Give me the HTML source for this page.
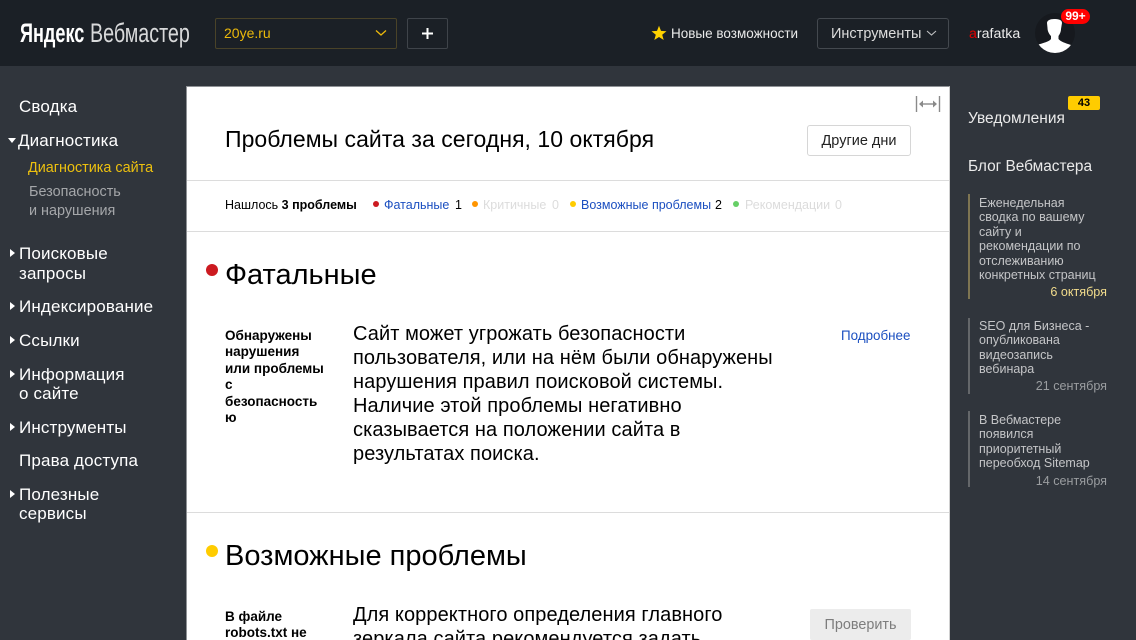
<!DOCTYPE html>
<html lang="ru">
<head>
<meta charset="utf-8">
<style>
html,body{margin:0;padding:0;width:1136px;height:640px;overflow:hidden;background:#30353c;font-family:"Liberation Sans","Noto Sans CJK SC",sans-serif;}
#w{position:relative;width:1136px;height:640px;overflow:hidden;}
.t{position:absolute;white-space:nowrap;}
.b{position:absolute;box-sizing:border-box;}
.nav{color:#fff;font-size:17px;letter-spacing:.15px;line-height:19.5px;left:19px;}
.tri{position:absolute;width:0;height:0;border-left:5px solid #fff;border-top:4px solid transparent;border-bottom:4px solid transparent;left:10px;}
.dot{position:absolute;border-radius:50%;}
.blog{color:#c4c5c7;font-size:12.5px;line-height:14.4px;left:979px;}
.date{font-size:12.6px;line-height:15px;text-align:right;right:29px;color:#9a9da0;}
.bar{position:absolute;left:968px;width:2px;background:#64676a;}
.f{font-size:12.5px;line-height:15px;}
.lnk{color:#1b4fc0;}
.off{color:#dcdcdc;}
.body{color:#000;font-size:20px;letter-spacing:.08px;line-height:24px;left:353px;}
.lbl{color:#000;font-size:13.5px;font-weight:bold;line-height:16.4px;left:225px;}
.h{color:#000;font-size:29px;line-height:32px;left:225px;}
</style>
</head>
<body>
<div id="w">
<div class="b" style="left:0;top:0;width:1136px;height:66px;background:#1b2026;"></div>

<div class="t" style="left:20px;top:15px;color:#fff;font-size:27px;line-height:36px;font-weight:bold;transform:scaleX(.67);transform-origin:0 50%;">Яндекс</div>
<div class="t" style="left:90px;top:15px;color:#d8d9da;font-size:27px;line-height:36px;transform:scaleX(.73);transform-origin:0 50%;">Вебмастер</div>

<div class="b" style="left:215px;top:18px;width:182px;height:31px;border:1px solid #4a4328;border-radius:2px;"></div>
<div class="t" style="left:224px;top:25px;color:#ecb90b;font-size:14px;line-height:17px;">20ye.ru</div>
<svg style="position:absolute;left:375px;top:29px" width="12" height="8" viewBox="0 0 12 8"><path d="M1 1.5 L6 6 L11 1.5" fill="none" stroke="#ecb90b" stroke-width="1.3"/></svg>

<div class="b" style="left:407px;top:18px;width:41px;height:31px;border:1px solid #3f444a;border-radius:2px;"></div>
<svg style="position:absolute;left:421px;top:27px" width="13" height="13" viewBox="0 0 13 13"><path d="M6.5 1 V12 M1 6.5 H12" fill="none" stroke="#fff" stroke-width="2"/></svg>

<svg style="position:absolute;left:651px;top:25px" width="16" height="16" viewBox="0 0 16 16"><path d="M8 .8 L10 5.9 L15.5 6.2 L11.2 9.7 L12.7 15 L8 12 L3.3 15 L4.8 9.7 L.5 6.2 L6 5.9 Z" fill="#ffd200"/></svg>
<div class="t" style="left:671px;top:26px;color:#eaeaea;font-size:13.5px;line-height:16px;">Новые возможности</div>

<div class="b" style="left:817px;top:18px;width:132px;height:31px;border:1px solid #44494f;border-radius:3px;"></div>
<div class="t" style="left:831px;top:26px;color:#dcdcdc;font-size:14.5px;line-height:17px;">Инструменты</div>
<svg style="position:absolute;left:926px;top:30px" width="11" height="7" viewBox="0 0 11 7"><path d="M1 1 L5.5 5 L10 1" fill="none" stroke="#bfc0c2" stroke-width="1.1"/></svg>

<div class="t" style="left:969px;top:26px;color:#eaeaea;font-size:14.2px;line-height:17px;"><span style="color:#e00000">a</span>rafatka</div>

<div class="b" style="left:1035px;top:13px;width:40px;height:40px;border-radius:50%;background:#16191e;overflow:hidden;">
<svg width="40" height="40" viewBox="0 0 40 40" style="display:block"><path d="M12 10 C12 7.500 15 6 19 6 C23 6 27 6.500 27 10 L26 16 C26 19 24.500 21.500 23.500 23 L23.500 26 C25.500 28.500 30 30 36 32 L36 40 L2 40 L2 32 C8 30 14.500 28.500 16 26 L16 23 C14 21 12.500 18 12.500 15 Z" fill="#fff"/></svg>
</div>
<div class="b" style="left:1061px;top:9px;width:29px;height:15px;border-radius:8px;background:#f00;color:#fff;font-size:12px;font-weight:bold;line-height:15px;text-align:center;">99+</div>

<div class="t nav" style="top:97px;">Сводка</div>
<div style="position:absolute;left:8px;top:138px;width:0;height:0;border-top:5px solid #fff;border-left:4px solid transparent;border-right:4px solid transparent;"></div>
<div class="t nav" style="top:131px;left:18px;">Диагностика</div>
<div class="t" style="left:28px;top:160px;color:#ecc00f;font-size:14.4px;line-height:17px;">Диагностика сайта</div>
<div class="t" style="left:29px;top:183px;color:#a5a7aa;font-size:14.4px;line-height:19px;">Безопасность<br>и нарушения</div>
<div class="tri" style="top:249px;"></div>
<div class="t nav" style="top:244px;">Поисковые<br>запросы</div>
<div class="tri" style="top:302px;"></div>
<div class="t nav" style="top:297px;">Индексирование</div>
<div class="tri" style="top:336px;"></div>
<div class="t nav" style="top:331px;">Ссылки</div>
<div class="tri" style="top:370px;"></div>
<div class="t nav" style="top:365px;line-height:19px;">Информация<br>о сайте</div>
<div class="tri" style="top:423px;"></div>
<div class="t nav" style="top:418px;">Инструменты</div>
<div class="t nav" style="top:451px;">Права доступа</div>
<div class="tri" style="top:490px;"></div>
<div class="t nav" style="top:485px;line-height:19px;">Полезные<br>сервисы</div>

<div class="b" style="left:186px;top:86px;width:764px;height:554px;background:#fff;border:1px solid #8f9296;border-bottom:none;border-right-color:#d0d0d0;"></div>
<svg style="position:absolute;left:915px;top:95px" width="26" height="18" viewBox="0 0 26 18"><path d="M1.500 1 V17 M24.500 1 V17" stroke="#8a8a8a" stroke-width="1.400" fill="none"/><path d="M5 9 H21" stroke="#8a8a8a" stroke-width="1.400" fill="none"/><path d="M4 9 L8 5.500 V12.500 Z M22 9 L18 5.500 V12.500 Z" fill="#8a8a8a"/></svg>

<div class="t" style="left:225px;top:125px;color:#000;font-size:23px;letter-spacing:.04px;line-height:28px;">Проблемы сайта за сегодня, 10 октября</div>
<div class="b" style="left:807px;top:125px;width:104px;height:31px;border:1px solid #d6d6d6;border-radius:3px;color:#222;font-size:14.5px;line-height:30px;text-align:center;">Другие дни</div>

<div class="b" style="left:187px;top:180px;width:762px;height:1px;background:#dcdcdc;"></div>
<div class="b" style="left:187px;top:231px;width:762px;height:1px;background:#dcdcdc;"></div>
<div class="b" style="left:187px;top:512px;width:762px;height:1px;background:#dcdcdc;"></div>

<div class="t f" style="left:225px;top:198px;color:#000;">Нашлось <b>3 проблемы</b></div>
<div class="dot" style="left:373px;top:201px;width:6px;height:6px;background:#cc1a20;"></div>
<div class="t f lnk" style="left:384px;top:198px;">Фатальные</div>
<div class="t f" style="left:455px;top:198px;color:#000;">1</div>
<div class="dot" style="left:472px;top:201px;width:6px;height:6px;background:#ff9500;"></div>
<div class="t f off" style="left:483px;top:198px;">Критичные</div>
<div class="t f off" style="left:552px;top:198px;">0</div>
<div class="dot" style="left:570px;top:201px;width:6px;height:6px;background:#ffcc00;"></div>
<div class="t f lnk" style="left:581px;top:198px;">Возможные проблемы</div>
<div class="t f" style="left:715px;top:198px;color:#000;">2</div>
<div class="dot" style="left:733px;top:201px;width:6px;height:6px;background:#66cf66;"></div>
<div class="t f off" style="left:745px;top:198px;">Рекомендации</div>
<div class="t f off" style="left:835px;top:198px;">0</div>

<div class="dot" style="left:206px;top:264px;width:12px;height:12px;background:#cc1a20;"></div>
<div class="t h" style="top:259px;">Фатальные</div>
<div class="t lbl" style="top:328px;">Обнаружены<br>нарушения<br>или проблемы<br>с<br>безопасность<br>ю</div>
<div class="t body" style="top:322px;">Сайт может угрожать безопасности<br>пользователя, или на нём были обнаружены<br>нарушения правил поисковой системы.<br>Наличие этой проблемы негативно<br>сказывается на положении сайта в<br>результатах поиска.</div>
<div class="t lnk" style="left:841px;top:328px;font-size:13.4px;line-height:15px;">Подробнее</div>

<div class="dot" style="left:206px;top:545px;width:12px;height:12px;background:#ffcc00;"></div>
<div class="t h" style="top:540px;">Возможные проблемы</div>
<div class="t lbl" style="top:609px;">В файле<br>robots.txt не</div>
<div class="t body" style="top:603px;">Для корректного определения главного<br>зеркала сайта рекомендуется задать</div>
<div class="b" style="left:810px;top:609px;width:101px;height:31px;background:#ececec;border-radius:2px;color:#7d7d7d;font-size:14.4px;line-height:32px;text-align:center;">Проверить</div>

<div class="t" style="left:968px;top:110px;color:#eaeaea;font-size:15.5px;line-height:18px;">Уведомления</div>
<div class="b" style="left:1068px;top:96px;width:32px;height:14px;background:#ffcc00;border-radius:2px;color:#000;font-size:11px;font-weight:bold;line-height:14px;text-align:center;">43</div>
<div class="t" style="left:968px;top:158px;color:#eaeaea;font-size:15.4px;line-height:18px;">Блог Вебмастера</div>

<div class="bar" style="top:194px;height:105px;background:#7e7552;"></div>
<div class="t blog" style="top:196px;">Еженедельная<br>сводка по вашему<br>сайту и<br>рекомендации по<br>отслеживанию<br>конкретных страниц</div>
<div class="t date" style="top:285px;color:#f2dc8c;">6 октября</div>

<div class="bar" style="top:318px;height:76px;"></div>
<div class="t blog" style="top:319px;">SEO для Бизнеса -<br>опубликована<br>видеозапись<br>вебинара</div>
<div class="t date" style="top:379px;">21 сентября</div>

<div class="bar" style="top:411px;height:76px;"></div>
<div class="t blog" style="top:413px;">В Вебмастере<br>появился<br>приоритетный<br>переобход Sitemap</div>
<div class="t date" style="top:474px;">14 сентября</div>
</div>
</body>
</html>
